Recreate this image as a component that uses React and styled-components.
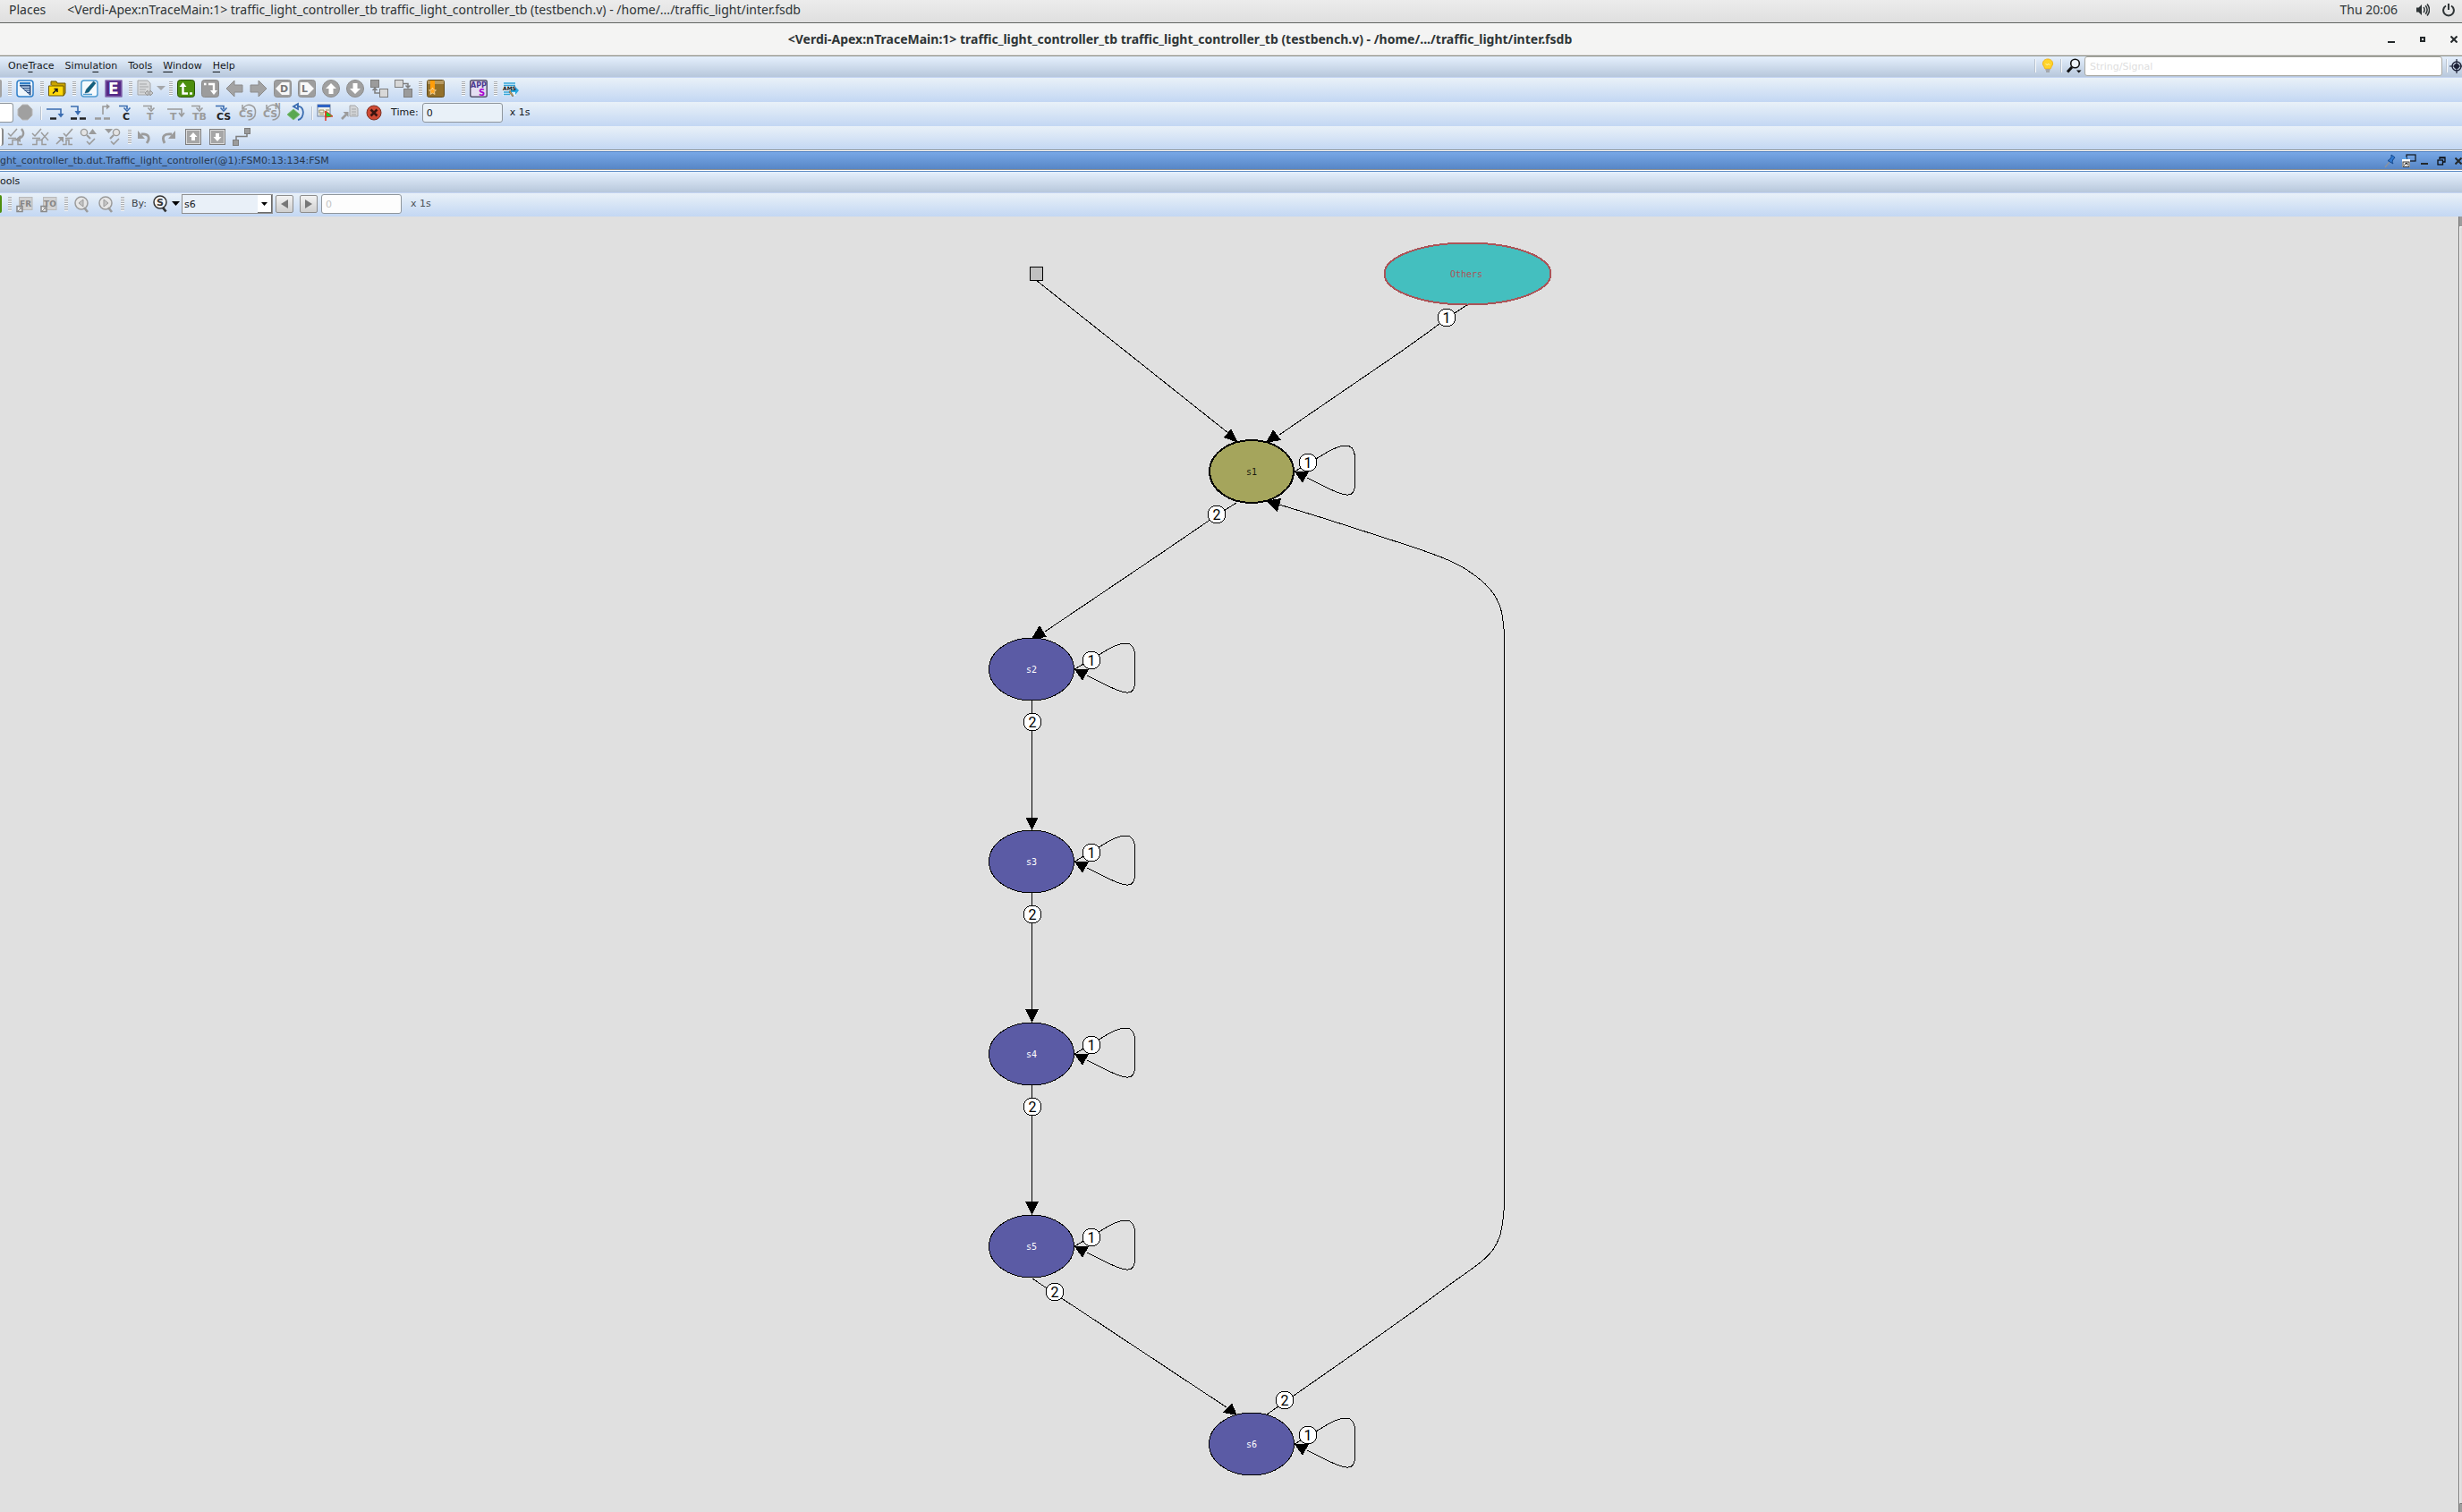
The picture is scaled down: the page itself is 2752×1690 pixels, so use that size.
import React from "react";
import styled, { createGlobalStyle, css } from "styled-components";

const UI_FONT = '"DejaVu Sans", Verdana, sans-serif';
const SHELL_FONT = '"Noto Sans", "Open Sans", sans-serif';

const GlobalStyle = createGlobalStyle`
  *, *::before, *::after { box-sizing: border-box; }
  body { margin: 0; background: #e0e0e0; font-family: ${UI_FONT}; font-size: 11px; color: #14181c; }
  button, input, select { font: inherit; color: inherit; }
`;

/* ---------- shell ---------- */

const Page = styled.div`
  display: flex;
  flex-direction: column;
  min-height: 100vh;
`;

const TopPanel = styled.header`
  display: flex;
  align-items: center;
  height: 26px;
  padding: 0 8px 3px 10px;
  background: linear-gradient(#ececec, #dfdfdf);
  border-bottom: 1px solid #5c5f5c;
  font-family: ${SHELL_FONT};
  font-size: 14px;
  line-height: 22px;
  color: #2e3436;
  white-space: nowrap;
`;

const PanelButton = styled.button`
  display: flex;
  align-items: center;
  padding: 0;
  margin-right: ${(p) => p.$gap || 0}px;
  border: 0;
  background: none;
`;

const Spacer = styled.div`
  flex: 1;
`;

const TitleBar = styled.div`
  display: flex;
  align-items: center;
  height: 37px;
  padding-bottom: 2px;
  background: #f4f4f3;
  border-top: 1px solid #fdfdfd;
  border-bottom: 1px solid #8b8d83;
  box-shadow: inset 0 -1px #dcdcda;
`;

const WindowTitle = styled.h1`
  flex: 1;
  margin: 0;
  overflow: hidden;
  text-align: center;
  font-family: ${SHELL_FONT};
  font-size: 14px;
  font-weight: 700;
  line-height: 22px;
  color: #2e3436;
  white-space: nowrap;
`;

const WindowControls = styled.div`
  display: flex;
  justify-content: space-between;
  width: 114px;
  padding: 0 5px 0 31px;
`;

const GlyphButton = styled.button`
  display: flex;
  padding: 0;
  border: 0;
  background: none;
`;

/* ---------- bars ---------- */

const MenuBar = styled.nav`
  display: flex;
  align-items: center;
  height: 24px;
  padding: 0 0 2px ${(p) => (p.$flush ? 0 : 3)}px;
  background: linear-gradient(#e5f0fd, #b7c7db);
  border-bottom: 1px solid #c3d4f2;
`;

const MenuItem = styled.button`
  padding: 0 6px 0 ${(p) => (p.$flush ? 0 : 6)}px;
  border: 0;
  background: none;
  line-height: 20px;

  u {
    text-underline-offset: 3px;
  }
`;

const Toolbar = styled.div`
  display: flex;
  align-items: center;
  height: ${(p) => (p.$short ? 26 : 27)}px;
  padding-bottom: ${(p) => (p.$short ? 2 : 3)}px;
  background: linear-gradient(#e9f1f8, #c3d7f3);
`;

const ToolButton = styled.button`
  display: flex;
  flex: none;
  width: ${(p) => (p.$wide ? 36 : 27)}px;
  padding: 0 0 0 3px;
  border: 0;
  background: none;

  svg {
    flex: none;
    overflow: visible;
  }
`;

const ClippedTool = styled.button`
  width: ${(p) => p.$width}px;
  height: 20px;
  padding: 0;
  border: 0;
  border-right: ${(p) => p.$edge || 0}px solid #8a8a8a;
  border-radius: 0 3px 3px 0;
  margin-right: ${(p) => p.$gap || 0}px;
  background: ${(p) => p.$fill};
`;

const Handle = styled.span`
  flex: none;
  width: 4px;
  height: 16px;
  margin: 0 2px 0 ${(p) => 3 + (p.$gap || 0)}px;
  background: repeating-linear-gradient(#a9adb2 0 1px, #f7f9fb 1px 2px);
`;

const Divider = styled.span`
  flex: none;
  width: 2px;
  height: 15px;
  margin: 0 ${(p) => p.$after ?? 1}px 0 ${(p) => p.$before ?? 3}px;
  background: linear-gradient(90deg, #b9c3cf 50%, #f8fafc 50%);
`;

const BarLabel = styled.label`
  margin-left: ${(p) => p.$gap}px;
  line-height: 20px;
  color: ${(p) => p.$color || "#14181c"};
  white-space: nowrap;
`;

const fieldLook = css`
  height: 22px;
  border: 1px solid #8f969c;
  border-radius: 3px;
  outline: none;
`;

const TimeInput = styled.input`
  ${fieldLook}
  width: 90px;
  margin-left: 4px;
  padding: 0 4px;
  background: ${(p) => (p.disabled ? "#fdfdfd" : "#e9f1f8")};
  color: ${(p) => (p.disabled ? "#c4c4c4" : "#14181c")};
`;

const ClippedInput = styled.input`
  ${fieldLook}
  width: 15px;
  padding: 0;
  border-left: 0;
  border-radius: 0 3px 3px 0;
  background: #fff;
`;

const SearchInput = styled.input`
  ${fieldLook}
  width: 400px;
  margin-left: 3px;
  padding: 2px 5px 0;
  border-color: #a9a9a3;
  background: #fff;

  &::placeholder {
    color: #dedede;
    opacity: 1;
  }
`;

const SelectBox = styled.div`
  position: relative;
  width: 102px;
  height: 22px;
  margin-left: 3px;
  border: 1px solid #8f8f8f;
  background: #e9f0f8;
`;

const StateSelect = styled.select`
  display: block;
  width: 100%;
  height: 20px;
  padding: 0 18px 0 2px;
  border: 0;
  outline: none;
  appearance: none;
  background: transparent;
`;

const SelectArrow = styled.span`
  position: absolute;
  top: 0;
  right: 0;
  display: flex;
  align-items: center;
  justify-content: center;
  width: 16px;
  height: 20px;
  background: #fff;
  border-right: 1px solid #6b6b6b;
  border-bottom: 1px solid #6b6b6b;
  pointer-events: none;
`;

const StepButton = styled.button`
  display: flex;
  align-items: center;
  justify-content: center;
  width: 20px;
  height: 20px;
  margin-left: ${(p) => p.$gap}px;
  padding: 0;
  border: 1px solid #8d8d8d;
  border-radius: 2px;
  background: linear-gradient(#f3f3f3, #cfcfcf);
`;

const SearchTools = styled.div`
  display: flex;
  align-items: center;
  margin-left: auto;
`;

const SubWindowBar = styled.div`
  display: flex;
  align-items: center;
  height: 25px;
  border-top: 1px solid #8f9494;
  border-bottom: 1px solid #5b8ac4;
  background: #fff;
  padding: 1px 0;
`;

const SubWindowTitle = styled.div`
  display: flex;
  flex: 1;
  align-items: center;
  height: 21px;
  border-top: 1px solid #4e7fc0;
  border-bottom: 1px solid #8d8f90;
  background: linear-gradient(#78a8e6, #5786c6);
`;

const SubWindowText = styled.h2`
  margin: 0 auto 0 0;
  font-size: 11px;
  font-weight: 400;
  line-height: 18px;
  color: #27364b;
  white-space: nowrap;
`;

const SubWindowControls = styled.div`
  display: flex;
  align-items: center;
  gap: 5px;
`;

const Workspace = styled.main`
  display: flex;
  flex: 1;
`;

const Canvas = styled.div`
  flex: 1;
  min-width: 0;
  background: #e0e0e0;
`;

const Diagram = styled.svg`
  display: block;
  width: 100%;
  height: 1448px;
  shape-rendering: crispEdges;
`;

const ScrollTrack = styled.div`
  display: flex;
  flex-direction: column;
  width: 4px;
  border-left: 1px solid #747474;
  background: #9c9c9c;
`;

const ScrollThumb = styled.div`
  flex: 1;
  margin: 11px 0 9px;
  border-top: 1px solid #fff;
  border-left: 1px solid #fff;
  border-bottom: 1px solid #747474;
  background: #dcdcdc;
`;

/* ---------- icons ---------- */

const G = "#9b9b9b";
const D = "#7d7d7d";
const B = "#3a6cb0";

const Svg = ({ w = 20, h = 20, children }) => (
  <svg width={w} height={h} viewBox={`0 0 ${w} ${h}`} fill="none" aria-hidden="true">
    {children}
  </svg>
);

const Letters = styled.text`
  font-family: "DejaVu Sans", Verdana, sans-serif;
  font-weight: 700;
  font-size: ${(p) => p.$size || 11}px;
`;

const WindowIcon = () => (
  <Svg>
    <rect x="1" y="1" width="18" height="18" rx="3" fill="#eef5fb" stroke="#2f7fc9" strokeWidth="1.5" />
    <rect x="4" y="3" width="12" height="2.4" fill="#2f7fc9" />
    <path d="M4.500 7h11v10z" fill="#b9cfe8" stroke="#2a4d80" />
    <path d="M4 6.500h12v11M7 9.500h8M9.500 12h6M12 14.500h3" stroke="#2a4d80" />
  </Svg>
);
const FolderIcon = () => (
  <Svg>
    <path d="M3 6V2h6l1 2h9v11l-2 3" fill="#c9a400" stroke="#6b5600" />
    <path d="M.500 7h16.500v11H.500z" fill="#ffd908" stroke="#6b5600" />
    <path d="M5 15.500l5-5M6.500 10.500H10V14" stroke="#1a1a1a" strokeWidth="1.500" />
  </Svg>
);
const PencilIcon = () => (
  <Svg>
    <rect x="1" y="1" width="18" height="18" rx="3" fill="#f6fafd" stroke="#4f9bd0" strokeWidth="1.500" />
    <path d="M14.500 2l2.500 2-8 10-4 1 1.500-4z" fill="#12607f" stroke="#0c4159" strokeWidth=".5" />
    <path d="M3 16.500h10" stroke="#4f9bd0" strokeWidth="1.500" />
  </Svg>
);
const EIcon = () => (
  <Svg>
    <rect x="0.500" y="0.500" width="19" height="19" fill="#552a86" />
    <rect x="1.500" y="1.500" width="17" height="17" stroke="#7b57a5" />
    <Letters x="4" y="16" $size={17} fill="#fff">E</Letters>
  </Svg>
);
const DocIcon = () => (
  <Svg w={33}>
    <path d="M1 1h11l3 3v13H1z" fill="#d6d8da" stroke="#a5a7a9" />
    <path d="M3 5h8M3 8h10M3 11h7M3 14h6" stroke="#a5a7a9" />
    <path d="M9 15l3-3v2h3v-2l3 3-3 3v-2h-3v2z" fill="#c5c7c9" stroke="#999" />
    <path d="M22 7h10l-5 5z" fill="#a5a7a9" />
  </Svg>
);
const LDownIcon = ({ green }) => (
  <Svg>
    <rect x="0.500" y="0.500" width="19" height="19" rx="3" fill={green ? "#4d8f0e" : "#9c9c9c"} stroke={green ? "#2c5606" : "#888"} />
    {green ? (
      <>
        <path d="M6.500 6v9.500H12M14 15.500h3" stroke="#fff" strokeWidth="2.400" />
        <path d="M2.500 8l4-5 4 5z" fill="#fff" />
      </>
    ) : (
      <>
        <path d="M8 5h6v7M3 5h2.500" stroke="#fff" strokeWidth="2.400" />
        <path d="M10 12h8l-4 5z" fill="#fff" />
      </>
    )}
  </Svg>
);
const ArrowIcon = ({ flip }) => (
  <Svg>
    <path
      d={flip ? "M19 10l-9-9v5H1v8h9v5z" : "M1 10l9-9v5h9v8h-9v5z"}
      fill="#a3a3a3"
      stroke="#8c8c8c"
    />
  </Svg>
);
const TagIcon = ({ letter, flip }) => (
  <Svg>
    <rect x="0.500" y="0.500" width="19" height="19" rx="3" fill="#9e9e9e" stroke="#8e8e8e" />
    <path d={flip ? "M2.500 3h8.500l7 7-7 7H2.500z" : "M17.500 3H9l-7 7 7 7h8.500z"} fill="#f8f8f8" />
    <Letters x={flip ? 4 : 7} y="14" $size={11} fill="#777">{letter}</Letters>
  </Svg>
);
const RoundArrowIcon = ({ down }) => (
  <Svg>
    <circle cx="10" cy="10" r="9.500" fill="#a0a0a0" stroke="#8c8c8c" />
    <path d={down ? "M10 16l-6-6h3.500V4h5v6H16z" : "M10 4l-6 6h3.500v6h5v-6H16z"} fill="#fff" />
  </Svg>
);
const LinkBoxesIcon = ({ flip }) => (
  <Svg>
    <rect x="0.500" y="0.500" width="9" height="8" fill={flip ? "#d8d8d8" : G} stroke={D} />
    <rect x="10.500" y="10.500" width="9" height="9" fill={flip ? G : "#d8d8d8"} stroke={D} />
    {flip ? (
      <path d="M10 4.500h5V8M12.500 6.500L15 9l2.500-2.500" stroke={D} strokeWidth="1.500" />
    ) : (
      <path d="M5 10v5h5M2.500 12L5 9.500 7.500 12" stroke={D} strokeWidth="1.500" />
    )}
  </Svg>
);
const BookIcon = () => (
  <Svg>
    <rect x="0.500" y="0.500" width="19" height="19" rx="2" fill="#93702a" stroke="#5f4a1c" />
    <rect x="1" y="1" width="18" height="4" fill="#b79a62" />
    <path d="M4 1h5v10H4z" fill="#ff9d0a" />
    <path d="M6.500 9l1.200 2.500 2.800.3-2 1.900.6 2.800-2.600-1.400-2.600 1.400.6-2.800-2-1.900 2.800-.3z" fill="#ffa51f" stroke="#fff0d0" strokeWidth=".6" />
  </Svg>
);
const AppsIcon = () => (
  <Svg>
    <rect x="0.750" y="0.750" width="18.500" height="18.500" rx="2" fill="#e4def2" stroke="#54506a" strokeWidth="1.500" />
    <Letters x="1" y="9" $size={8} fill="#4b3a90">APP</Letters>
    <Letters x="10" y="18" $size={10} fill="#a800d0">S</Letters>
  </Svg>
);
const AmsIcon = () => (
  <Svg>
    <rect x="1" y="2" width="15" height="16" fill="#dff1fa" />
    <path d="M2 4h13M2 6.500h13M2 14h9M2 16.500h7" stroke="#35a3d8" strokeWidth="1.500" />
    <path d="M10 11h5V8l4 4-4 5v-3h-5z" fill="#28a7dd" />
    <path d="M9 12l4 6-1 1-4-5z" fill="#c9a25a" stroke="#444" strokeWidth=".5" />
    <Letters x="1" y="12" $size={6} fill="#111">AMS</Letters>
  </Svg>
);

const OctagonIcon = () => (
  <Svg>
    <path d="M7 1h6l5 5v7l-5 5H7l-5-5V6z" fill="#a0a0a0" stroke="#b9b9b9" />
  </Svg>
);
const StepOverIcon = ({ inward }) => (
  <Svg>
    <path d={inward ? "M1 3h8v7" : "M1 6h16v7"} stroke={B} strokeWidth="1.600" />
    <path d={inward ? "M5.500 8h7L9 13z" : "M13.500 11h7l-3.500 4.500z"} fill={B} />
    <path d={inward ? "M1 16.500h7M11 16.500h7" : "M5 16.500h7"} stroke="#222" strokeWidth="2.400" />
  </Svg>
);
const StepOutIcon = () => (
  <Svg>
    <path d="M10 12V3h5" stroke={G} strokeWidth="1.600" />
    <path d="M14 0l4 3-4 3.500z" fill={G} />
    <path d="M1 16.500h7M11 16.500h7" stroke={G} strokeWidth="2.400" />
  </Svg>
);
const StepLetterIcon = ({ letters, active }) => (
  <Svg>
    <path d="M1 2.500h9V6M6.500 4.500L10 8l3.500-3.500" stroke={active ? B : G} strokeWidth="1.600" />
    <Letters x={letters.length > 1 ? 2 : 5} y="18" $size={11} fill={active ? "#222" : G}>{letters}</Letters>
  </Svg>
);
const StepTIcon = () => (
  <Svg>
    <path d="M1 6h16v7M14 10l3 4 3-4" stroke={G} strokeWidth="1.600" />
    <Letters x="4" y="18" $size={11} fill={G}>T</Letters>
  </Svg>
);
const CycleIcon = ({ n }) => (
  <Svg>
    <path d="M5 5C8-1 19 0 18.500 10c0 5-4 8-8 8M4 1v5h5" stroke={G} strokeWidth="1.500" />
    <Letters x="0" y="15" $size={11} fill={G}>CS</Letters>
    {n && <Letters x="13" y="6" $size={8} fill={G}>N</Letters>}
  </Svg>
);
const DiamondIcon = () => (
  <Svg>
    <path d="M7 3l5-3v6zM11 3c9-2 9 14 1 15" stroke={B} strokeWidth="1.800" />
    <path d="M7 6l7 6-7 6-7-6z" fill="#5aa851" stroke="#7fbf78" />
  </Svg>
);
const FormRunIcon = () => (
  <Svg>
    <rect x="1" y="1" width="14" height="13" fill="#eef0ea" stroke="#6f7f9c" />
    <rect x="1" y="1" width="14" height="3" fill="#2d62c4" />
    <path d="M3 7h5v3H3zM10 7h4M3 12h5" stroke="#9a8f62" />
    <path d="M10 8l8 6-8 1z" fill="#11d62a" stroke="#e2331f" />
    <path d="M10 8v11" stroke="#e2331f" strokeWidth="1.500" />
  </Svg>
);
const ExportDocIcon = () => (
  <Svg>
    <path d="M10 2h6l3 3v9h-9z" fill="#d3d5d7" stroke="#a5a7a9" />
    <path d="M12 6h5M12 9h5M12 12h5" stroke="#a5a7a9" />
    <path d="M1 17l5-5" stroke={G} strokeWidth="2.600" />
    <path d="M2.500 9h6v6z" fill={G} />
  </Svg>
);
const StopIcon = () => (
  <Svg>
    <circle cx="10" cy="10" r="8" fill="#cf4a34" stroke="#7d3326" />
    <path d="M6.500 6.500l7 7M13.500 6.500l-7 7" stroke="#3a1510" strokeWidth="2.600" />
  </Svg>
);

const WaveCheckIcon = ({ kind }) => (
  <Svg>
    <path
      d={kind === "go" ? "M8 18.500h4v-5h3v5h4M11 11.500h8" : "M1 11.500h9M1 18.500h5v-5h6v5h5"}
      stroke={G}
      strokeWidth="1.500"
    />
    {kind !== "go" && <path d="M1 6l3 3 7-8" stroke={G} strokeWidth="1.500" />}
    {kind === "back" && (
      <>
        <path d="M16 1c4 5 2 9-3 11" stroke={G} strokeWidth="2.400" />
        <path d="M9 13l6-5v8z" fill={G} />
      </>
    )}
    {kind === "cross" && <path d="M11 5l8 9M19 5l-8 9" stroke={G} strokeWidth="1.400" />}
    {kind === "go" && (
      <>
        <path d="M9 6l3 3 7-8M1 18l5-5" stroke={G} strokeWidth="1.600" />
        <path d="M2.500 10H9v6.500z" fill={G} />
      </>
    )}
  </Svg>
);
const FindCheckIcon = ({ down }) => (
  <Svg>
    <circle cx={down ? 14 : 5} cy="5" r="3.600" fill="#e4e4e4" stroke={G} strokeWidth="1.400" />
    <path d={down ? "M11 8l-4 4" : "M8 8l4 4"} stroke={G} strokeWidth="2.200" />
    <path d={down ? "M1 1h9L5.500 6z" : "M10 7h9l-4.500-6z"} fill={G} />
    <path d="M8 15l3 3 6-6" stroke={G} strokeWidth="1.600" />
  </Svg>
);
const UndoIcon = ({ redo }) => (
  <Svg>
    {redo ? (
      <>
        <path d="M5 17C1 9 5 6 13 7" stroke={G} strokeWidth="2.800" />
        <path d="M17 3v9H9z" fill={G} />
      </>
    ) : (
      <>
        <path d="M12 17c5-7 1-11-6-10" stroke={G} strokeWidth="2.800" />
        <path d="M2 3v9h8z" fill={G} />
      </>
    )}
  </Svg>
);
const SquareArrowIcon = ({ down }) => (
  <Svg>
    <rect x="1.500" y="1.500" width="17" height="17" fill="#dcdcdc" stroke={D} />
    <rect x="3" y="3" width="14" height="14" fill="#a6a6a6" />
    <path d={down ? "M10 15l-4.500-5H8V6h4v4h2.500z" : "M10 5l-4.500 5H8v4h4v-4h2.500z"} fill="#fff" />
  </Svg>
);
const RouteIcon = () => (
  <Svg>
    <path d="M4 13V9.500h12V6" stroke={D} strokeWidth="1.500" />
    <rect x="0.500" y="13.500" width="6" height="6" fill={G} stroke={D} />
    <rect x="13.500" y="0.500" width="6" height="6" fill={G} stroke={D} />
  </Svg>
);
const FromToIcon = ({ label }) => (
  <Svg>
    <rect x="3.500" y="2.500" width="14.500" height="14" fill="#d2d2d2" stroke="#b9b9b9" />
    <Letters x="4" y="13" $size={9} fill="#858585">{label}</Letters>
    <rect x="1" y="12.500" width="6" height="6" fill="#f0f0f0" stroke="#888" strokeWidth="1.500" />
    <path d="M2 18l4-4M3.500 14H6v2.500" stroke="#888" />
  </Svg>
);
const NavLensIcon = ({ next }) => (
  <Svg>
    <circle cx="10" cy="9" r="7" fill="#e6e6e6" stroke={G} strokeWidth="1.500" />
    <path d={next ? "M8 5l5 4-5 4z" : "M12 5L7 9l5 4z"} fill="#c4c4c4" stroke={G} />
    <path d="M13 14l4 5" stroke={G} strokeWidth="2.600" />
  </Svg>
);
const StateLensIcon = () => (
  <Svg w={33}>
    <circle cx="12" cy="8" r="7" fill="#f4f4f4" stroke="#333" strokeWidth="1.500" />
    <path d="M15 14l3.500 4.500" stroke="#333" strokeWidth="2.800" />
    <Letters x="8" y="12" $size={11} fill="#333">S</Letters>
    <path d="M25 7h9l-4.500 5z" fill="#000" />
  </Svg>
);
const BulbIcon = () => (
  <Svg w={14} h={17}>
    <path d="M7 1c4 0 6 3 5.500 6-.5 2-2 3-2.500 5H4C3.500 10 2 9 1.500 7 1 4 3 1 7 1z" fill="#ffd42a" stroke="#f0b41c" />
    <path d="M4.500 6l2 2 1-2 2 2" stroke="#fff3a8" />
    <path d="M4.500 13h5M5 15h4" stroke="#9a9a9a" strokeWidth="1.500" />
  </Svg>
);
const SearchIcon = () => (
  <Svg w={17} h={17}>
    <circle cx="9.500" cy="6" r="4.800" fill="#eef4fb" stroke="#111" strokeWidth="1.600" />
    <path d="M6 10l-5 5.500" stroke="#111" strokeWidth="3" />
    <path d="M11 13.500h5.500L13.700 16.500z" fill="#111" />
  </Svg>
);
const TargetIcon = () => (
  <Svg w={14} h={16}>
    <circle cx="8" cy="8" r="5" stroke="#1b2136" strokeWidth="1.400" />
    <circle cx="8" cy="8" r="3" fill="#1b2136" />
    <path d="M8 0v16M0 8h16" stroke="#1b2136" strokeWidth="1.200" />
  </Svg>
);
const VolumeIcon = () => (
  <Svg w={16} h={16}>
    <path d="M1 5.500h2.500L7 2v12L3.500 10.500H1z" fill="#2e3436" />
    <path d="M9 5c1.500 2 1.500 4 0 6M11.200 3.200c2.400 3 2.400 6.600 0 9.600M13 1.500c3.200 4 3.200 9 0 13" stroke="#2e3436" strokeWidth="1.500" />
  </Svg>
);
const PowerIcon = () => (
  <Svg w={14} h={16}>
    <path d="M4 3.500a5.900 5.900 0 1 0 6 0M7 1v7" stroke="#2e3436" strokeWidth="2" />
  </Svg>
);
const MinimizeIcon = () => (
  <Svg w={8} h={8}>
    <path d="M0 7h8" stroke="#23282a" strokeWidth="2" />
  </Svg>
);
const MaximizeIcon = () => (
  <Svg w={8} h={8}>
    <rect x="2" y="2" width="4" height="4" stroke="#23282a" strokeWidth="2" />
  </Svg>
);
const CloseIcon = () => (
  <Svg w={8} h={8}>
    <path d="M.500 .500l7 7M7.500 .500l-7 7" stroke="#23282a" strokeWidth="2" />
  </Svg>
);
const PinIcon = () => (
  <Svg w={14} h={16}>
    <path d="M1 15l5-6" stroke="#8a93a0" strokeWidth="1.500" />
    <path d="M8 1l4 3-1 1.500-1 .5-1 3 1 2-6-3.500 2-1 2-3z" fill="#2f78d0" stroke="#164a8e" />
  </Svg>
);
const UndockIcon = () => (
  <Svg w={17} h={16}>
    <rect x="6" y="1" width="10" height="7" stroke="#10151c" strokeWidth="1.200" />
    <rect x="1" y="6" width="9" height="9" fill="#fff" />
    <rect x="2" y="9" width="7" height="5.500" stroke="#333" />
    <path d="M3 13l3.500-3M4.500 10.500H7V13" stroke="#222" />
    <path d="M2 5h4" stroke="#5aa6ee" strokeWidth="2" />
  </Svg>
);
const RestoreIcon = () => (
  <Svg w={10} h={10}>
    <path d="M3 3V1h6v5H7M3 1.500h6" stroke="#0b0f14" strokeWidth="1.300" />
    <rect x="1" y="4" width="5.500" height="5" stroke="#0b0f14" strokeWidth="1.300" />
  </Svg>
);

/* ---------- state diagram ---------- */

const NodeText = styled.text`
  font-family: "DejaVu Sans Mono", "Liberation Mono", monospace;
  font-size: 10px;
  text-anchor: middle;
`;

const BadgeText = styled.text`
  font-family: Roboto, "Liberation Sans", sans-serif;
  font-size: 16px;
  font-weight: 400;
  text-anchor: middle;
`;

const Badge = ({ x, y, children }) => (
  <>
    <circle cx={x} cy={y} r="10" fill="#fff" stroke="#000" />
    <BadgeText x={x} y={y + 6}>{children}</BadgeText>
  </>
);

const STATES = [
  { name: "s1", x: 1399, y: 285, badge: 63, fill: "#a5a55c", ink: "#1c1c10", border: 2 },
  { name: "s2", x: 1153, y: 506, badge: 67 },
  { name: "s3", x: 1153, y: 721, badge: 67 },
  { name: "s4", x: 1153, y: 936, badge: 67 },
  { name: "s5", x: 1153, y: 1151, badge: 67 },
  { name: "s6", x: 1399, y: 1372, badge: 63 },
];

const EDGES = [
  { line: "M1158 71L1373 242", head: "1384,253 1368,247 1376,237" },
  { line: "M1641 98L1617 114Q1600 127 1566 151L1430 244", head: "1415,253 1423,238 1432,250" },
  { line: "M1382 320L1360 334L1297 377L1168 464", head: "1153,472 1162,457 1170,470" },
  { line: "M1153.500 541V673", head: "1153.500,686 1146.500,672 1160.500,672" },
  { line: "M1153.500 756V887", head: "1153.500,901 1146,886 1161,886" },
  { line: "M1153.500 971V1102", head: "1153.500,1116 1146,1101 1161,1101" },
  { line: "M1154 1187L1179 1204L1371 1331", head: "1383,1340 1367,1337 1377,1326" },
  {
    line: "M1416 1339L1519 1267L1578 1225L1623 1192L1647 1175C1668 1160 1673 1150 1677 1138C1680 1125 1681.500 1110 1681.500 1098V466C1680 450 1679 440 1675 432Q1668 414 1644 398C1630 387 1605 378 1575 368L1482 338L1430 322",
    head: "1415,318 1432,315 1428,330",
  },
];

const BADGES = [
  [1617, 113, 1],
  [1360, 333, 2],
  [1154, 565, 2],
  [1154, 780, 2],
  [1154, 995, 2],
  [1179, 1202, 2],
  [1436, 1323, 2],
];

const StateNode = ({ name, x, y, badge, fill = "#5b5ba5", ink = "#fff", border = 1 }) => (
  <g transform={`translate(${x} ${y})`}>
    <path
      d="M48 0L77 -17C88 -24 98 -29 105 -29C112 -29 115.500 -23 115.500 -14V14C115.500 22 113 26 108 26C101 27 88 20 62 7"
      fill="none"
      stroke="#000"
    />
    <ellipse rx={border > 1 ? 47 : 47.5} ry="35" fill={fill} stroke="#000" strokeWidth={border} />
    <NodeText y="4" fill={ink}>{name}</NodeText>
    <Badge x={badge} y={-10}>1</Badge>
    <path d="M48 0H64L57 13z" fill="#000" />
  </g>
);

const StateDiagram = () => (
  <Diagram role="img" aria-label="Finite state machine">
    {EDGES.map(({ line, head }) => (
      <g key={line}>
        <path d={line} fill="none" stroke="#000" />
        <polygon points={head} fill="#000" />
      </g>
    ))}
    <rect x="1151.5" y="56.5" width="14" height="15" fill="#c0c0c0" stroke="#000" />
    <ellipse cx="1640.5" cy="64" rx="93" ry="34.500" fill="#44bfbf" stroke="#ab5458" strokeWidth="2" />
    <NodeText x="1639" y="68" fill="#ab5458">Others</NodeText>
    {STATES.map((s) => (
      <StateNode key={s.name} {...s} />
    ))}
    {BADGES.map(([x, y, n]) => (
      <Badge key={`${x}-${y}`} x={x} y={y}>{n}</Badge>
    ))}
  </Diagram>
);

/* ---------- page ---------- */

const TITLE =
  "<Verdi-Apex:nTraceMain:1> traffic_light_controller_tb traffic_light_controller_tb (testbench.v) - /home/.../traffic_light/inter.fsdb";

const Tools = ({ items }) =>
  items.map(([label, icon]) => (
    <ToolButton key={label} aria-label={label}>
      {icon}
    </ToolButton>
  ));

const NAVIGATE = [
  ["Trace driver", <LDownIcon green />],
  ["Trace load", <LDownIcon />],
  ["Back", <ArrowIcon />],
  ["Forward", <ArrowIcon flip />],
  ["Driver", <TagIcon letter="D" />],
  ["Load", <TagIcon letter="L" flip />],
  ["Up", <RoundArrowIcon />],
  ["Down", <RoundArrowIcon down />],
  ["Fan in", <LinkBoxesIcon />],
  ["Fan out", <LinkBoxesIcon flip />],
];

const STEPS = [
  ["Step over", <StepOverIcon />],
  ["Step in", <StepOverIcon inward />],
  ["Step out", <StepOutIcon />],
  ["Next class", <StepLetterIcon letters="C" active />],
  ["Next thread", <StepLetterIcon letters="T" />],
  ["Over thread", <StepTIcon />],
  ["Next testbench", <StepLetterIcon letters="TB" />],
  ["Constraint solver", <StepLetterIcon letters="CS" active />],
  ["Solver cycle", <CycleIcon />],
  ["Next solver cycle", <CycleIcon n />],
  ["Restart", <DiamondIcon />],
];

const RUNS = [
  ["Run form", <FormRunIcon />],
  ["Export source", <ExportDocIcon />],
  ["Stop", <StopIcon />],
];

const CHECKS = [
  ["Check back", <WaveCheckIcon kind="back" />],
  ["Check clear", <WaveCheckIcon kind="cross" />],
  ["Check go", <WaveCheckIcon kind="go" />],
  ["Find up", <FindCheckIcon />],
  ["Find down", <FindCheckIcon down />],
];

const HISTORY = [
  ["Undo", <UndoIcon />],
  ["Redo", <UndoIcon redo />],
  ["Scope up", <SquareArrowIcon />],
  ["Scope down", <SquareArrowIcon down />],
  ["Route", <RouteIcon />],
];

export default function App() {
  return (
    <Page>
      <GlobalStyle />

      <TopPanel>
        <PanelButton $gap={24}>Places</PanelButton>
        <PanelButton>{TITLE}</PanelButton>
        <Spacer />
        <PanelButton $gap={20}>Thu 20:06</PanelButton>
        <PanelButton $gap={14} aria-label="Volume"><VolumeIcon /></PanelButton>
        <PanelButton aria-label="Power"><PowerIcon /></PanelButton>
      </TopPanel>

      <TitleBar>
        <WindowTitle>{TITLE}</WindowTitle>
        <WindowControls>
          <GlyphButton aria-label="Minimize"><MinimizeIcon /></GlyphButton>
          <GlyphButton aria-label="Maximize"><MaximizeIcon /></GlyphButton>
          <GlyphButton aria-label="Close"><CloseIcon /></GlyphButton>
        </WindowControls>
      </TitleBar>

      <MenuBar>
        <MenuItem>One<u>T</u>race</MenuItem>
        <MenuItem>Simul<u>a</u>tion</MenuItem>
        <MenuItem>Tool<u>s</u></MenuItem>
        <MenuItem><u>W</u>indow</MenuItem>
        <MenuItem><u>H</u>elp</MenuItem>
        <SearchTools>
          <Divider $after={6} />
          <GlyphButton aria-label="Tips"><BulbIcon /></GlyphButton>
          <Divider $before={7} $after={5} />
          <GlyphButton aria-label="Search"><SearchIcon /></GlyphButton>
          <SearchInput placeholder="String/Signal" aria-label="String or signal" />
          <Divider $before={4} $after={2} />
          <GlyphButton aria-label="Locate"><TargetIcon /></GlyphButton>
        </SearchTools>
      </MenuBar>

      <Toolbar>
        <ClippedTool $width={2} $gap={4} $fill="#a3a3a3" aria-label="More" />
        <Handle />
        <Tools items={[["New window", <WindowIcon />]]} />
        <Handle />
        <Tools items={[["Open", <FolderIcon />]]} />
        <Handle />
        <Tools items={[["Edit", <PencilIcon />], ["Eclipse", <EIcon />]]} />
        <Handle />
        <ToolButton $wide aria-label="Source views"><DocIcon /></ToolButton>
        <Handle />
        <Tools items={NAVIGATE} />
        <Handle />
        <Tools items={[["Bookmarks", <BookIcon />]]} />
        <Handle $gap={12} />
        <Tools items={[["Apps", <AppsIcon />]]} />
        <Handle />
        <Tools items={[["AMS", <AmsIcon />]]} />
      </Toolbar>

      <Toolbar>
        <ClippedInput aria-label="Run until" />
        <Tools items={[["Halt", <OctagonIcon />]]} />
        <Divider />
        <Tools items={STEPS} />
        <Divider />
        <Tools items={RUNS} />
        <BarLabel htmlFor="sim-time" $gap={5}>Time:</BarLabel>
        <TimeInput id="sim-time" defaultValue="0" />
        <BarLabel as="span" $gap={8}>x 1s</BarLabel>
      </Toolbar>

      <Toolbar $short>
        <ClippedTool $width={4} $edge={2} $gap={1} $fill="#fff" aria-label="List" />
        <Tools items={CHECKS} />
        <Handle />
        <Tools items={HISTORY} />
      </Toolbar>

      <SubWindowBar>
        <SubWindowTitle>
          <SubWindowText>ght_controller_tb.dut.Traffic_light_controller(@1):FSM0:13:134:FSM</SubWindowText>
          <SubWindowControls>
            <GlyphButton aria-label="Pin"><PinIcon /></GlyphButton>
            <GlyphButton aria-label="Undock"><UndockIcon /></GlyphButton>
            <GlyphButton aria-label="Minimize pane"><MinimizeIcon /></GlyphButton>
            <Spacer />
            <GlyphButton aria-label="Restore pane"><RestoreIcon /></GlyphButton>
            <Spacer />
            <GlyphButton aria-label="Close pane"><CloseIcon /></GlyphButton>
          </SubWindowControls>
        </SubWindowTitle>
      </SubWindowBar>

      <MenuBar $flush>
        <MenuItem $flush>ools</MenuItem>
      </MenuBar>

      <Toolbar $short>
        <ClippedTool $width={2} $gap={4} $fill="#4d8f0e" aria-label="Trace" />
        <Handle />
        <Tools items={[["From state", <FromToIcon label="FR" />], ["To state", <FromToIcon label="TO" />]]} />
        <Handle />
        <Tools items={[["Previous match", <NavLensIcon />], ["Next match", <NavLensIcon next />]]} />
        <Handle />
        <BarLabel htmlFor="by-state" $gap={6} $color="#3c4248">By:</BarLabel>
        <ToolButton $wide aria-label="Search by"><StateLensIcon /></ToolButton>
        <SelectBox>
          <StateSelect id="by-state" defaultValue="s6">
            {STATES.map((s) => (
              <option key={s.name}>{s.name}</option>
            ))}
          </StateSelect>
          <SelectArrow>
            <Svg w={7} h={4}><path d="M0 0h7L3.500 4z" fill="#000" /></Svg>
          </SelectArrow>
        </SelectBox>
        <StepButton $gap={3} aria-label="Previous">
          <Svg w={8} h={10}><path d="M8 0v10L0 5z" fill="#777" /></Svg>
        </StepButton>
        <StepButton $gap={7} aria-label="Next">
          <Svg w={8} h={10}><path d="M0 0v10l8-5z" fill="#777" /></Svg>
        </StepButton>
        <TimeInput defaultValue="0" disabled aria-label="State time" />
        <BarLabel as="span" $gap={10} $color="#4c5257">x 1s</BarLabel>
      </Toolbar>

      <Workspace>
        <Canvas>
          <StateDiagram />
        </Canvas>
        <ScrollTrack>
          <ScrollThumb />
        </ScrollTrack>
      </Workspace>
    </Page>
  );
}
